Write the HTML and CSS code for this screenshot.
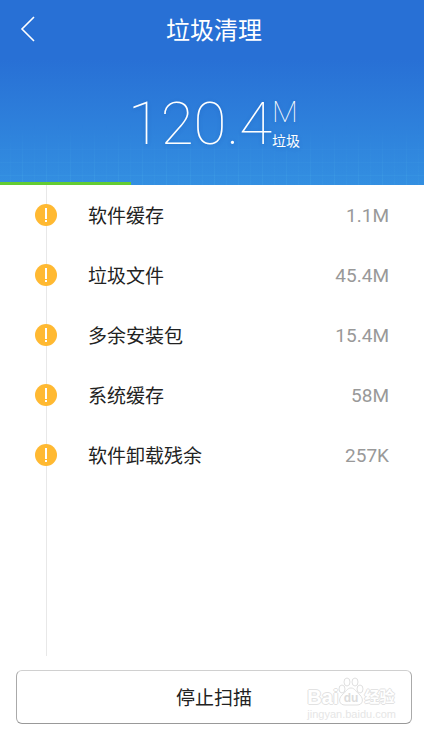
FILE: index.html
```html
<!DOCTYPE html>
<html lang="zh-CN">
<head>
  <meta charset="UTF-8">
  <meta name="viewport" content="width=device-width, initial-scale=1">
  <title>垃圾清理</title>
  <link rel="stylesheet" href="styles.css">
</head>
<body>

  <header class="header">
    <div class="topbar">
      <button class="back" type="button" aria-label="返回">
        <svg width="16" height="28" viewBox="0 0 16 28" fill="none" stroke="#fff" stroke-width="1.6">
          <path d="M14 2 L2 14 L14 26"/>
        </svg>
      </button>
      <h1>垃圾清理</h1>
    </div>

    <div class="total">
      <span class="number">120.4</span>
      <span class="side">
        <span class="unit">M</span>
        <span class="label">垃圾</span>
      </span>
    </div>

    <progress class="progress" value="31" max="100" aria-label="扫描进度"></progress>
  </header>

  <main class="content">
    <ul class="list">
      <li>
        <svg class="icon" viewBox="0 0 22 22"><circle cx="11" cy="11" r="11" fill="#ffb932"/><path d="M10 4h2v11h-2zM10 16h2v2h-2z" fill="#fff"/></svg>
        <span class="name">软件缓存</span>
        <span class="size">1.1M</span>
      </li>
      <li>
        <svg class="icon" viewBox="0 0 22 22"><circle cx="11" cy="11" r="11" fill="#ffb932"/><path d="M10 4h2v11h-2zM10 16h2v2h-2z" fill="#fff"/></svg>
        <span class="name">垃圾文件</span>
        <span class="size">45.4M</span>
      </li>
      <li>
        <svg class="icon" viewBox="0 0 22 22"><circle cx="11" cy="11" r="11" fill="#ffb932"/><path d="M10 4h2v11h-2zM10 16h2v2h-2z" fill="#fff"/></svg>
        <span class="name">多余安装包</span>
        <span class="size">15.4M</span>
      </li>
      <li>
        <svg class="icon" viewBox="0 0 22 22"><circle cx="11" cy="11" r="11" fill="#ffb932"/><path d="M10 4h2v11h-2zM10 16h2v2h-2z" fill="#fff"/></svg>
        <span class="name">系统缓存</span>
        <span class="size">58M</span>
      </li>
      <li>
        <svg class="icon" viewBox="0 0 22 22"><circle cx="11" cy="11" r="11" fill="#ffb932"/><path d="M10 4h2v11h-2zM10 16h2v2h-2z" fill="#fff"/></svg>
        <span class="name">软件卸载残余</span>
        <span class="size">257K</span>
      </li>
    </ul>
  </main>

  <footer class="footer">
    <button class="stop" type="button">停止扫描</button>
    <div class="watermark">
      <div class="brand">
        <span>Bai</span>
        <svg width="26" height="30" viewBox="0 0 26 30" fill="#fff" stroke="#e0e0e0">
          <ellipse cx="4" cy="12" rx="3" ry="4"/>
          <ellipse cx="9" cy="5" rx="3" ry="4"/>
          <ellipse cx="17" cy="5" rx="3" ry="4"/>
          <ellipse cx="22" cy="12" rx="3" ry="4"/>
          <path d="M13 11c-4 0-5 4-9 7c-4 4-3 10 3 10h12c6 0 7-6 3-10c-4-3-5-7-9-7z"/>
          <text class="du" x="13" y="25" text-anchor="middle">du</text>
        </svg>
        <span class="cn">经验</span>
      </div>
      <div class="site">jingyan.baidu.com</div>
    </div>
  </footer>

</body>
</html>
```
FILE: styles.css
```css
* {
  box-sizing: border-box;
}

body {
  margin: 0;
  min-height: 100vh;
  display: flex;
  flex-direction: column;
  background: #fff;
  color: #222;
  font-family: Roboto, "Noto Sans CJK SC", sans-serif;
}

button {
  font-family: inherit;
  cursor: pointer;
}

.header {
  position: relative;
  display: flex;
  flex-direction: column;
  color: #fff;
  background: linear-gradient(#2870d5 0, #2870d5 60px, #338fe1 100%);
}

/* faint grid that fades in towards the bottom */
.header::before {
  content: "";
  position: absolute;
  left: 0;
  right: 0;
  bottom: 0;
  height: 61px;
  background:
    repeating-linear-gradient(90deg, transparent 0 22px, rgba(80, 180, 235, 0.2) 22px 23px, transparent 23px 24px),
    repeating-linear-gradient(90deg, transparent 0 10px, rgba(80, 180, 235, 0.1) 10px 11px, transparent 11px 24px),
    repeating-linear-gradient(transparent 0 12px, rgba(80, 180, 235, 0.15) 12px 13px);
  -webkit-mask-image: linear-gradient(transparent, #000);
  mask-image: linear-gradient(transparent, #000);
}

.topbar {
  display: grid;
  grid-template-columns: 60px 1fr 56px;
  align-items: center;
  height: 58px;
}

.back {
  display: flex;
  padding: 0 0 0 20px;
  border: none;
  background: none;
}

h1 {
  margin: 0;
  padding-top: 4px;
  font-size: 24px;
  font-weight: 400;
  line-height: 36px;
  text-align: center;
}

.total {
  position: relative;
  display: flex;
  justify-content: center;
  height: 124px;
  padding: 36px 0 0 4px;
  text-shadow: 0 1px 4px rgba(10, 60, 150, 0.2);
}

.number {
  font-size: 60px;
  font-weight: 100;
  line-height: 60px;
}

.side {
  display: flex;
  flex-direction: column;
  padding-top: 2px;
}

.unit {
  font-size: 30px;
  font-weight: 100;
  line-height: 32px;
}

.label {
  font-size: 14px;
  line-height: 26px;
}

.progress {
  position: relative;
  display: block;
  width: 100%;
  height: 3px;
  border: none;
  background: transparent;
  -webkit-appearance: none;
  appearance: none;
}

.progress::-webkit-progress-bar {
  background: transparent;
}

.progress::-webkit-progress-value {
  background: #64cc32;
}

/* timeline runs behind the icons */
.content {
  flex: 1;
  background: linear-gradient(#e8e8e8, #e8e8e8) 46px 0 / 1px 100% no-repeat;
}

.list {
  margin: 0;
  padding: 0;
  list-style: none;
}

.list li {
  display: flex;
  align-items: center;
  height: 60px;
  padding: 0 35px;
}

.icon {
  width: 22px;
  height: 22px;
}

.name {
  flex: 1;
  padding: 0 0 2px 31px;
  font-size: 19px;
}

.size {
  color: #999;
  font-size: 19px;
}

.footer {
  position: relative;
  padding: 14px 12px 7px 16px;
}

.stop {
  display: block;
  width: 100%;
  height: 54px;
  padding: 0 0 2px;
  border: 1px solid #aaa;
  border-top-color: #d0d0d0;
  border-bottom-color: #999;
  border-radius: 6px;
  background: #fff;
  color: #222;
  font-size: 19px;
}

.watermark {
  position: absolute;
  right: 28px;
  bottom: 10px;
  color: #fff;
  font-family: "Liberation Sans", "Noto Sans CJK SC", sans-serif;
  text-shadow: 1px 0 #e2e2e2, -1px 0 #e2e2e2, 0 1px #e2e2e2, 0 -1px #e2e2e2;
  pointer-events: none;
}

.brand {
  display: flex;
  align-items: flex-end;
  height: 30px;
  font-size: 20px;
  font-weight: 700;
  line-height: 20px;
}

.cn {
  font-size: 15px;
}

.du {
  fill: #dcdcdc;
  stroke: none;
  font-size: 12px;
  font-weight: 700;
  text-shadow: none;
}

.site {
  color: #e6e6e6;
  font-size: 11px;
  line-height: 14px;
  text-shadow: none;
}
```
